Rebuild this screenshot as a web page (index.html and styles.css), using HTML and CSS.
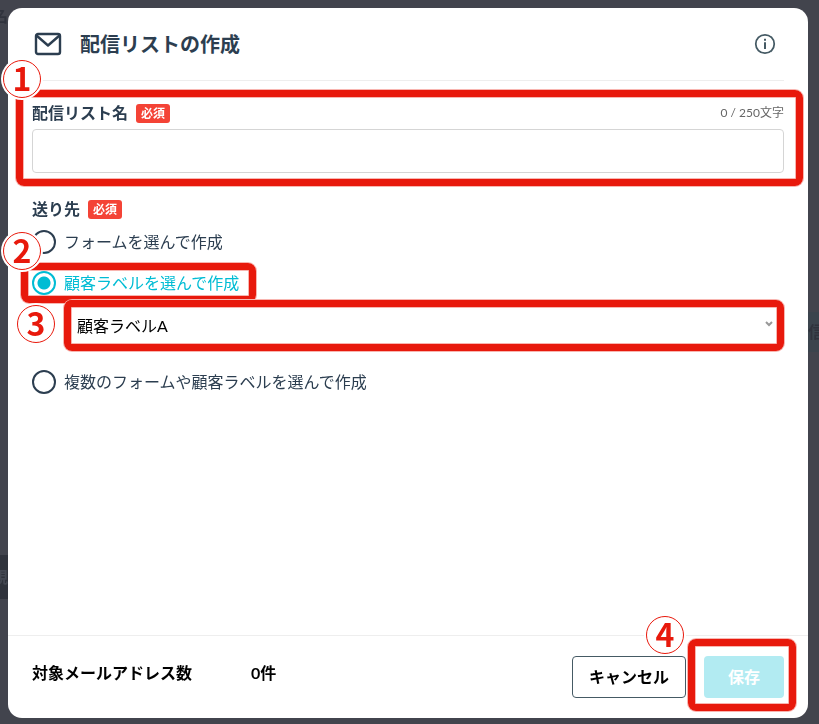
FILE: index.html
```html
<!DOCTYPE html>
<html lang="ja">
<head>
<meta charset="utf-8">
<meta name="viewport" content="width=device-width, initial-scale=1">
<title>配信リストの作成</title>
<link rel="stylesheet" href="styles.css">
</head>
<body>
<div class="backdrop" aria-hidden="true">
  <span class="behind behind-name">名</span>
  <span class="behind behind-new">規</span>
  <span class="behind behind-send">信</span>
</div>
<form class="modal">
  <header class="modal-header">
    <svg class="icon-mail" viewBox="0 0 28 24" fill="none" stroke="#2c3e50" stroke-width="2.4" stroke-linejoin="round" stroke-linecap="round" aria-hidden="true">
      <rect x="2" y="2" width="24" height="20" rx="2"/>
      <path d="M2.5 3.5 14 13.500 25.500 3.500"/>
    </svg>
    <h1>配信リストの作成</h1>
    <button type="button" class="info" aria-label="ヘルプ">
      <svg viewBox="0 0 20 20" fill="none" stroke="#455a64" aria-hidden="true">
        <circle cx="10" cy="10" r="8.400" stroke-width="1.600"/>
        <path d="M10 8.500v6M10 5.200v1.800" stroke-width="1.800"/>
      </svg>
    </button>
  </header>

  <main class="modal-body">
    <section class="field marked">
      <div class="label-row">
        <label class="label" for="list-name">配信リスト名</label>
        <span class="badge">必須</span>
        <span class="counter">0 / 250文字</span>
      </div>
      <input class="text-input" id="list-name" type="text" maxlength="250">
      <span class="frame frame-name"></span>
      <span class="step step-name">1</span>
    </section>

    <fieldset class="targets">
      <legend class="label-row"><span class="label">送り先</span><span class="badge">必須</span></legend>
      <label class="option"><input type="radio" name="target">フォームを選んで作成</label>
      <div class="marked">
        <label class="option"><input type="radio" name="target" checked>顧客ラベルを選んで作成</label>
        <span class="frame frame-option"></span>
        <span class="step step-option">2</span>
      </div>
      <div class="select-wrap marked">
        <select class="select" aria-label="顧客ラベル"><option>顧客ラベルA</option></select>
        <svg class="chevron" viewBox="0 0 8 6" fill="none" stroke="#999" stroke-width="2" aria-hidden="true"><path d="M1 1l3 3 3-3"/></svg>
        <span class="frame frame-select"></span>
        <span class="step step-select">3</span>
      </div>
      <label class="option"><input type="radio" name="target">複数のフォームや顧客ラベルを選んで作成</label>
    </fieldset>
  </main>

  <footer class="modal-footer">
    <div class="summary">
      <span>対象メールアドレス数</span>
      <span>0件</span>
    </div>
    <button type="button" class="button cancel">キャンセル</button>
    <div class="marked">
      <button type="submit" class="button save" disabled>保存</button>
      <span class="frame frame-save"></span>
      <span class="step step-save">4</span>
    </div>
  </footer>
</form>
</body>
</html>
```
FILE: styles.css
```css
* { box-sizing: border-box; }

body {
  margin: 0;
  min-height: 100vh;
  display: flex;
  padding: 8px 11px 6px 8px;
  background: #42444d;
  color: #2c3e50;
  font: 16px/24px Lato, "Noto Sans CJK JP", sans-serif;
}

button, input, select { font: inherit; color: inherit; margin: 0; }

.backdrop { position: fixed; inset: 0; overflow: hidden; }
.behind { position: absolute; font-weight: 700; color: #30333d; }
.behind-name { left: -8px; top: 4px; }
.behind-new { left: -8px; top: 555px; line-height: 44px; background: #30333c; color: #444852; }
.behind-send { right: -5px; top: 312px; line-height: 40px; background: #3b444d; }

.modal {
  position: relative;
  flex: 1;
  display: flex;
  flex-direction: column;
  background: #fff;
  border-radius: 14px;
}

.modal-header {
  display: flex;
  align-items: center;
  margin: 0 24px;
  padding: 0 8px 0 2px;
  height: 73px;
  border-bottom: 1px solid #eee;
}
.icon-mail { width: 28px; height: 24px; margin-right: 18px; }
h1 { margin: 0; font-size: 20px; line-height: 28px; font-weight: 700; }
.info { margin-left: auto; padding: 0; border: 0; background: none; display: flex; }
.info svg { width: 22px; height: 22px; }

.modal-body { flex: 1; padding: 20px 24px; }
.label-row { display: flex; align-items: center; gap: 8px; height: 24px; padding: 0; }
.label { font-weight: 700; }
.badge {
  padding: 1px 5px 0;
  border-radius: 3px;
  background: #f44336;
  color: #fff;
  font-size: 12px;
  line-height: 18px;
  font-weight: 700;
}
.counter { margin-left: auto; font-size: 12px; color: #666; }
.text-input {
  display: block;
  width: 100%;
  height: 44px;
  margin-top: 4px;
  padding: 0 12px;
  border: 1px solid #d5d5d5;
  border-radius: 4px;
  background: #fff;
}

.targets { border: 0; margin: 24px 0 0; padding: 0; min-width: 0; }
.option { display: flex; align-items: center; gap: 8px; height: 41px; }
.option:has(:checked) { color: #00bcd4; }
.option input {
  appearance: none;
  width: 24px;
  height: 24px;
  border: 2px solid #2c3e50;
  border-radius: 50%;
  background: #fff;
}
.option input:checked {
  border-color: #00bcd4;
  background: radial-gradient(circle, #00bcd4 6px, #fff 7px);
}
.select-wrap { margin: 1px 0 13px 32px; }
.select {
  appearance: none;
  display: block;
  width: 100%;
  height: 44px;
  padding: 0 12px;
  border: 1px solid #d5d5d5;
  border-radius: 4px;
  background: #fff;
  color: #000;
}
.chevron { position: absolute; right: 11px; top: 17px; width: 8px; height: 6px; }

.modal-footer {
  display: flex;
  align-items: center;
  height: 83px;
  padding: 0 24px;
  border-top: 1px solid #eee;
  color: #000;
  font-weight: 700;
}
.summary { display: flex; gap: 59px; padding-bottom: 8px; }
.button { height: 42px; padding: 0 16px; border-radius: 4px; font-weight: 700; }
.cancel { margin: 0 18px 0 auto; border: 1px solid #455a64; background: #fff; }
.save { display: block; width: 80px; border: 0; background: #b2ebf2; color: #fff; }

/* Numbered guide marks drawn over the form */
.marked { position: relative; }
.frame {
  position: absolute;
  border: 7px solid #e8190c;
  border-radius: 8px;
  box-shadow: 0 0 0 1px #f8b5b0, inset 0 0 0 1px #f8b5b0;
  pointer-events: none;
}
.frame-name { inset: -11px -19px -13px -16px; }
.frame-option { left: -11px; top: 1px; width: 235px; height: 40px; }
.frame-select { inset: -4px 0 -3px 0; }
.frame-save { inset: -17px -12px -13px -16px; }
.step {
  position: absolute;
  z-index: 1;
  width: 38px;
  height: 38px;
  border: 1px solid #e8190c;
  border-radius: 50%;
  background: #fff;
  box-shadow: 0 0 0 2px #fff;
  color: #e8190c;
  font: 700 32px/32px "Noto Sans CJK JP", sans-serif;
  text-align: center;
}
.step-name { left: -29px; top: -41px; }
.step-option { left: -29px; top: -30px; }
.step-select { left: -47px; top: 1px; }
.step-save { left: -58px; top: -40px; }
```
